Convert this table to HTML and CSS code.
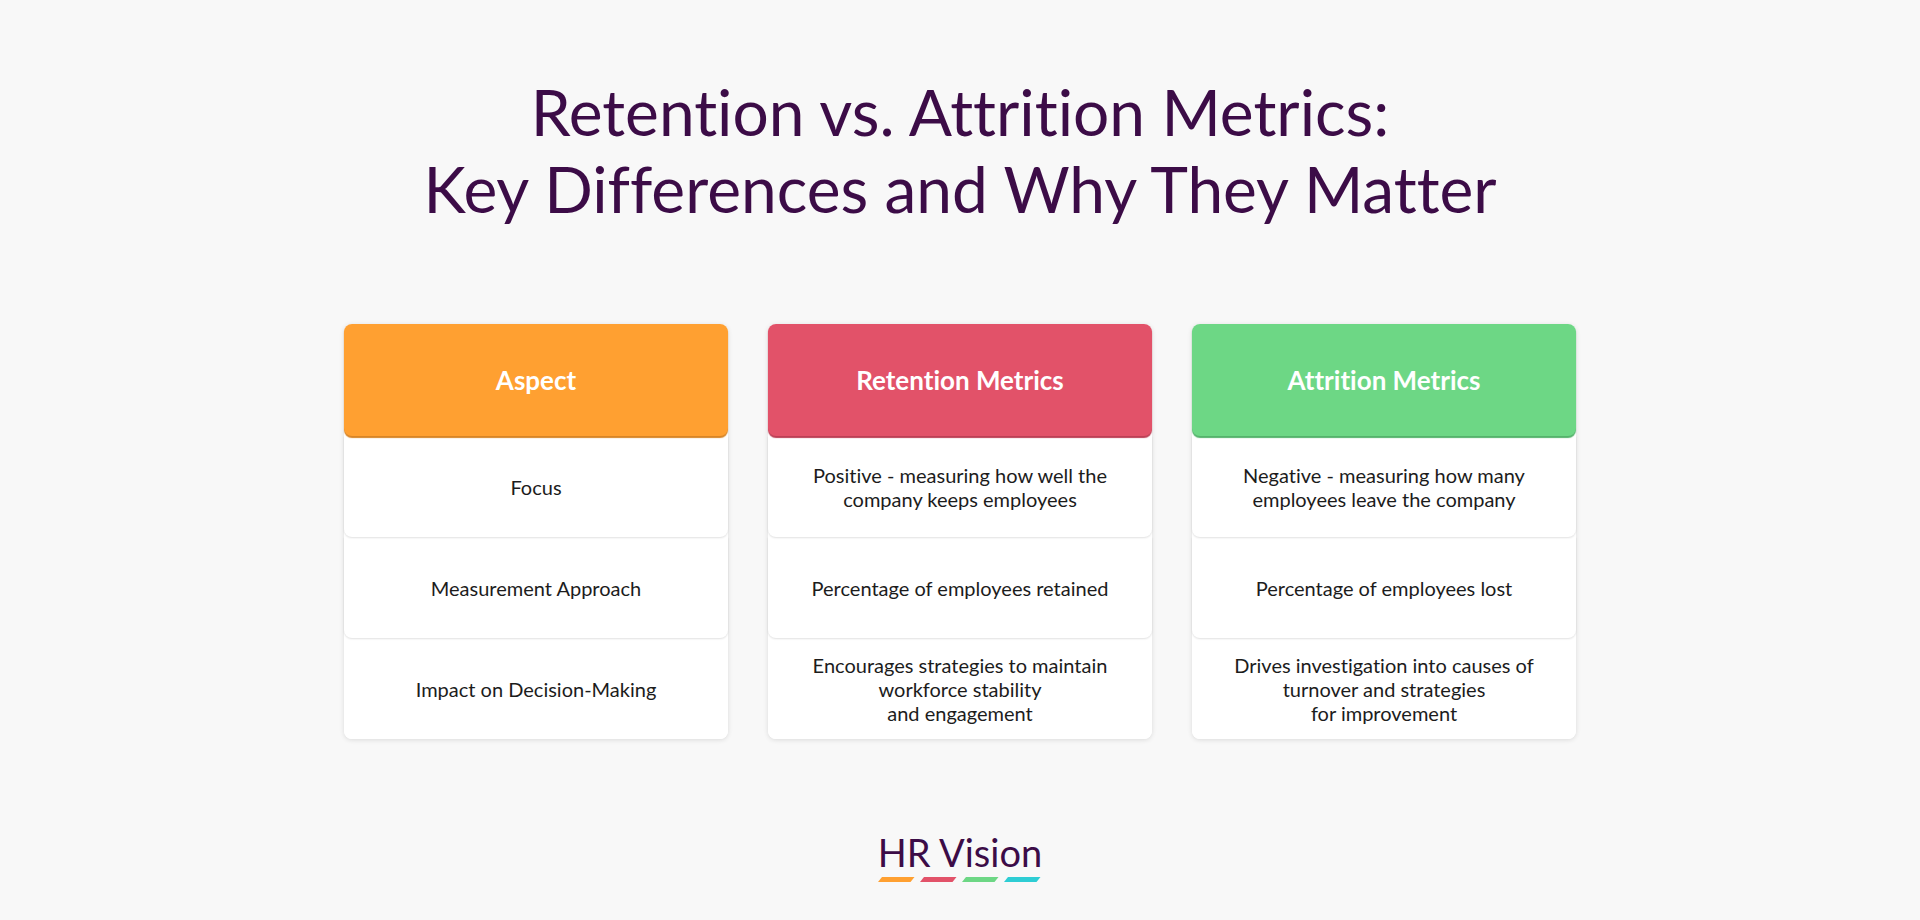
FILE: index.html
```html
<!DOCTYPE html>
<html lang="en">
<head>
<meta charset="utf-8">
<title>Retention vs. Attrition Metrics</title>
<link rel="stylesheet" href="styles.css">
</head>
<body>
<main class="page">
  <h1 class="title">Retention vs. Attrition Metrics:<br>Key Differences and Why They Matter</h1>
  <section class="columns">
    <div class="col">
      <div class="head head-orange">Aspect</div>
      <div class="cell">Focus</div>
      <div class="cell">Measurement Approach</div>
      <div class="cell">Impact on Decision-Making</div>
    </div>
    <div class="col">
      <div class="head head-red">Retention Metrics</div>
      <div class="cell">Positive - measuring how well the<br>company keeps employees</div>
      <div class="cell">Percentage of employees retained</div>
      <div class="cell">Encourages strategies to maintain<br>workforce stability<br>and engagement</div>
    </div>
    <div class="col">
      <div class="head head-green">Attrition Metrics</div>
      <div class="cell">Negative - measuring how many<br>employees leave the company</div>
      <div class="cell">Percentage of employees lost</div>
      <div class="cell">Drives investigation into causes of<br>turnover and strategies<br>for improvement</div>
    </div>
  </section>
  <footer class="logo">
    <div class="logo-text">HR Vision</div>
    <svg class="logo-bars" width="163" height="5" viewBox="0 0 163 5">
      <polygon points="4,0 36.5,0 32.5,5 0,5" fill="#ffa031"/>
      <polygon points="46,0 78.5,0 74.5,5 42,5" fill="#e25269"/>
      <polygon points="88,0 120.5,0 116.5,5 84,5" fill="#6dd785"/>
      <polygon points="130,0 162.5,0 158.5,5 126,5" fill="#2ecdd4"/>
    </svg>
  </footer>
</main>
</body>
</html>
```

FILE: styles.css
```css
html, body {
  margin: 0;
  padding: 0;
}
body {
  background: #f8f8f8;
  font-family: Lato, "Open Sans", "Liberation Sans", sans-serif;
  font-variant-ligatures: none;
  color: #1c1c1c;
}
.page {
  display: flex;
  flex-direction: column;
  align-items: center;
  width: 1920px;
  height: 920px;
}
.title {
  margin: 73px 0 0;
  font-size: 64px;
  line-height: 77px;
  font-weight: 400;
  color: #3c0c47;
  text-align: center;
}
.columns {
  display: flex;
  gap: 40px;
  margin-top: 97px;
}
.col {
  width: 384px;
  background: #ffffff;
  border-radius: 8px;
  box-shadow: 0 1px 5px rgba(0, 0, 0, 0.12);
  display: flex;
  flex-direction: column;
}
.head {
  height: 112px;
  border-radius: 8px;
  display: flex;
  align-items: center;
  justify-content: center;
  color: #ffffff;
  font-size: 26px;
  font-weight: 700;
  position: relative;
  z-index: 4;
}
.head-orange {
  background: #ffa031;
  box-shadow: 0 2px 1px #d88526;
}
.head-red {
  background: #e25269;
  box-shadow: 0 2px 1px #bc3f55;
}
.head-green {
  background: #6dd785;
  box-shadow: 0 2px 1px #54b36b;
}
.cell {
  height: 101px;
  display: flex;
  align-items: center;
  justify-content: center;
  text-align: center;
  font-size: 20px;
  line-height: 24px;
  background: #ffffff;
  border-radius: 0 0 8px 8px;
  box-shadow: 0 1px 2px rgba(0, 0, 0, 0.12);
  position: relative;
}
.cell:nth-child(2) { z-index: 3; }
.cell:nth-child(3) { z-index: 2; }
.cell:nth-child(4) { z-index: 1; box-shadow: none; }
.logo {
  margin-top: 95px;
  display: flex;
  flex-direction: column;
  align-items: center;
}
.logo-text {
  font-size: 38px;
  line-height: 36px;
  color: #3c0c47;
  font-weight: 400;
}
.logo-bars {
  display: block;
  margin-top: 7px;
}
```
